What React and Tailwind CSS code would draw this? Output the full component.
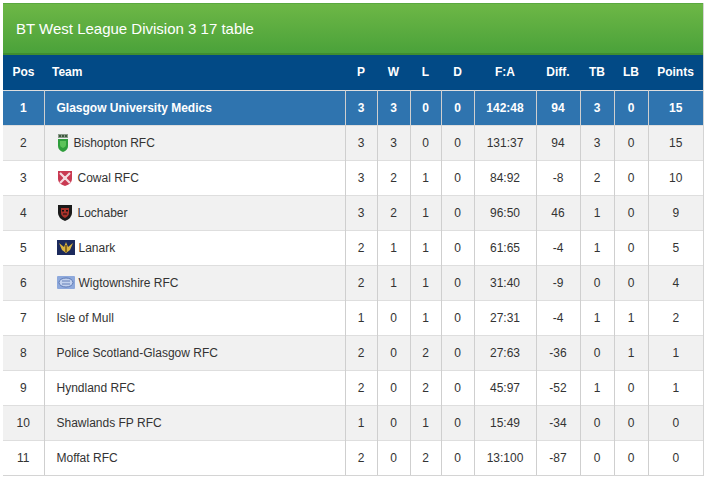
import React from 'react';

const teams = [
  { pos: 1, name: 'Glasgow University Medics', p: 3, w: 3, l: 0, d: 0, fa: '142:48', diff: 94, tb: 3, lb: 0, pts: 15, crest: null },
  { pos: 2, name: 'Bishopton RFC', p: 3, w: 3, l: 0, d: 0, fa: '131:37', diff: 94, tb: 3, lb: 0, pts: 15, crest: 'bishopton' },
  { pos: 3, name: 'Cowal RFC', p: 3, w: 2, l: 1, d: 0, fa: '84:92', diff: -8, tb: 2, lb: 0, pts: 10, crest: 'cowal' },
  { pos: 4, name: 'Lochaber', p: 3, w: 2, l: 1, d: 0, fa: '96:50', diff: 46, tb: 1, lb: 0, pts: 9, crest: 'lochaber' },
  { pos: 5, name: 'Lanark', p: 2, w: 1, l: 1, d: 0, fa: '61:65', diff: -4, tb: 1, lb: 0, pts: 5, crest: 'lanark' },
  { pos: 6, name: 'Wigtownshire RFC', p: 2, w: 1, l: 1, d: 0, fa: '31:40', diff: -9, tb: 0, lb: 0, pts: 4, crest: 'wigtown' },
  { pos: 7, name: 'Isle of Mull', p: 1, w: 0, l: 1, d: 0, fa: '27:31', diff: -4, tb: 1, lb: 1, pts: 2, crest: null },
  { pos: 8, name: 'Police Scotland-Glasgow RFC', p: 2, w: 0, l: 2, d: 0, fa: '27:63', diff: -36, tb: 0, lb: 1, pts: 1, crest: null },
  { pos: 9, name: 'Hyndland RFC', p: 2, w: 0, l: 2, d: 0, fa: '45:97', diff: -52, tb: 1, lb: 0, pts: 1, crest: null },
  { pos: 10, name: 'Shawlands FP RFC', p: 1, w: 0, l: 1, d: 0, fa: '15:49', diff: -34, tb: 0, lb: 0, pts: 0, crest: null },
  { pos: 11, name: 'Moffat RFC', p: 2, w: 0, l: 2, d: 0, fa: '13:100', diff: -87, tb: 0, lb: 0, pts: 0, crest: null },
];

const Crest = ({ type }) => {
  if (type === 'bishopton') {
    return (
      <svg width="12" height="18" viewBox="0 0 12 18" className="mr-[5px] shrink-0">
        <rect x="1" y="0" width="10" height="4" fill="#8a9a8a" />
        <rect x="2" y="1" width="2" height="2" fill="#3d5a3d" />
        <rect x="5" y="1" width="2" height="2" fill="#3d5a3d" />
        <rect x="8" y="1" width="2" height="2" fill="#3d5a3d" />
        <path d="M1 5 H11 V12 Q11 16 6 18 Q1 16 1 12 Z" fill="#2f9e3c" />
        <path d="M3 7 H9 V11 Q9 13 6 14 Q3 13 3 11 Z" fill="#5cc35a" />
      </svg>
    );
  }
  if (type === 'cowal') {
    return (
      <svg width="16" height="16" viewBox="0 0 16 16" className="mr-[5px] shrink-0">
        <path d="M1 1 H15 V9 Q15 14 8 16 Q1 14 1 9 Z" fill="#c93a52" />
        <path d="M3 3 L13 13 M13 3 L3 13" stroke="#f4dbe0" strokeWidth="2.2" />
        <circle cx="8" cy="8" r="2" fill="#f4dbe0" />
      </svg>
    );
  }
  if (type === 'lochaber') {
    return (
      <svg width="16" height="17" viewBox="0 0 16 17" className="mr-[5px] shrink-0">
        <path d="M1 1 H15 V9 Q15 14 8 17 Q1 14 1 9 Z" fill="#1a1a1a" />
        <path d="M4 4 H12 V9 Q12 12 8 14 Q4 12 4 9 Z" fill="#a8322a" />
        <rect x="5" y="6" width="2" height="1.5" fill="#111" />
        <rect x="9" y="6" width="2" height="1.5" fill="#111" />
        <path d="M6 10 H10" stroke="#111" strokeWidth="1" />
      </svg>
    );
  }
  if (type === 'lanark') {
    return (
      <svg width="18" height="15" viewBox="0 0 18 15" className="mr-[4px] shrink-0">
        <rect x="0" y="0" width="18" height="15" fill="#1c2a5c" />
        <path d="M2 3 L7 7 L9 2 L11 7 L16 3 L13 10 L9 13 L5 10 Z" fill="#d9b440" />
        <rect x="8" y="5" width="2" height="7" fill="#8a6a1c" />
      </svg>
    );
  }
  if (type === 'wigtown') {
    return (
      <svg width="18" height="13" viewBox="0 0 18 13" className="mr-[4px] shrink-0">
        <rect x="0" y="0" width="18" height="13" rx="1" fill="#8ea9dc" />
        <ellipse cx="9" cy="6.5" rx="7" ry="4.5" fill="#c3d2ee" stroke="#4d6aa8" strokeWidth="0.8" />
        <path d="M5 5 H13 M5 8 H13" stroke="#4d6aa8" strokeWidth="0.8" />
      </svg>
    );
  }
  return null;
};

const cols = ['P', 'W', 'L', 'D', 'F:A', 'Diff.', 'TB', 'LB', 'Points'];
const widths = ['w-[41px]', 'w-[301px]', 'w-[32px]', 'w-[33px]', 'w-[31px]', 'w-[33px]', 'w-[62px]', 'w-[44px]', 'w-[34px]', 'w-[34px]', 'w-[55px]'];

export default function App() {
  return (
    <div className="bg-white min-h-[480px] pt-[3px] pl-[3px]" style={{ fontFamily: '"Liberation Sans", Arial, sans-serif' }}>
      <div className="w-[701px] border-r border-b border-[#d4d4d4]">
        {/* Title bar */}
        <div className="h-[52px] flex items-center px-[13px] bg-gradient-to-b from-[#6db746] to-[#4aa23a] border-t border-[#5aa83f] border-b-2 border-b-[#3f8d30]">
          <h2 className="text-white text-[15px] pt-[1px]">BT West League Division 3 17 table</h2>
        </div>

        <table className="table-fixed border-collapse w-[700px] text-[12px]">
          <colgroup>
            {widths.map((w, i) => (
              <col key={i} className={w} />
            ))}
          </colgroup>
          <thead>
            <tr className="bg-[#024a86] text-white h-[35px]">
              <th className="font-bold text-center">Pos</th>
              <th className="font-bold text-left pl-[8px]">Team</th>
              {cols.map((c) => (
                <th key={c} className="font-bold text-center">{c}</th>
              ))}
            </tr>
          </thead>
          <tbody>
            {teams.map((t) => {
              const top = t.pos === 1;
              const rowCls = top
                ? 'bg-[#2f74af] text-white font-bold'
                : t.pos % 2 === 0
                ? 'bg-[#f1f1f1] text-[#333]'
                : 'bg-white text-[#333]';
              const cell = 'text-center border-l border-[#cfcfcf]';
              return (
                <tr key={t.pos} className={`h-[35px] border-t border-[#dedede] ${rowCls}`}>
                  <td className="text-center">{t.pos}</td>
                  <td className="border-l border-[#cfcfcf] pl-[12px]">
                    <div className="flex items-center">
                      <Crest type={t.crest} />
                      <span>{t.name}</span>
                    </div>
                  </td>
                  <td className={cell}>{t.p}</td>
                  <td className={cell}>{t.w}</td>
                  <td className={cell}>{t.l}</td>
                  <td className={cell}>{t.d}</td>
                  <td className={cell}>{t.fa}</td>
                  <td className={cell}>{t.diff}</td>
                  <td className={cell}>{t.tb}</td>
                  <td className={cell}>{t.lb}</td>
                  <td className={cell}>{t.pts}</td>
                </tr>
              );
            })}
          </tbody>
        </table>
      </div>
    </div>
  );
}
